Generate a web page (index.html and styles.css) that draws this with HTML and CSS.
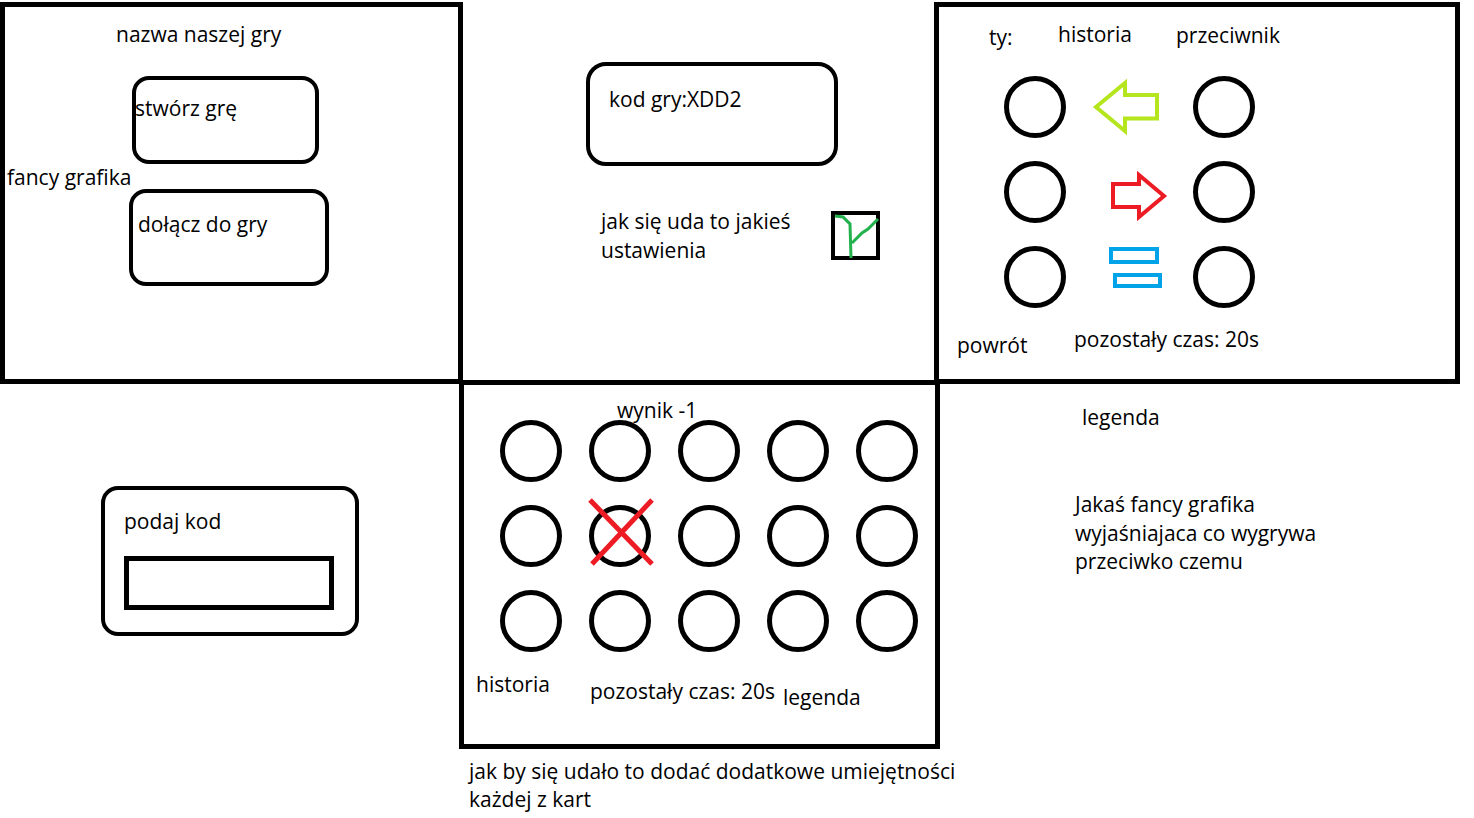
FILE: index.html
```html
<!DOCTYPE html>
<html lang="pl">
<head>
    <meta charset="UTF-8">
    <meta name="viewport" content="width=device-width, initial-scale=1.0">
    <title>Szkic gry</title>
    <link rel="stylesheet" href="styles.css">
</head>
<body>
    <div class="board">
        <!-- ekran startowy -->
        <div class="panel menu">
            <div class="game-title">nazwa naszej gry</div>
            <div class="btn btn-create">stwórz grę</div>
            <div class="fancy">fancy grafika</div>
            <div class="btn btn-join">dołącz do gry</div>
        </div>

        <!-- lobby -->
        <div class="lobby">
            <div class="code-box">kod gry:XDD2</div>
            <div class="settings">
                <div class="settings-text">jak się uda to jakieś<br>ustawienia</div>
                <svg class="checkbox" width="49" height="49" viewBox="0 0 49 49">
                    <rect x="2" y="2" width="45" height="45" fill="none" stroke="#000" stroke-width="4"/>
                    <path d="M4 5 L12 6 L19 13 L20 47 M21 32 L31 22 L37 18 L47 8" fill="none" stroke="#22b14c" stroke-width="3"/>
                </svg>
            </div>
        </div>

        <!-- pojedynek -->
        <div class="panel duel">
            <div class="duel-head">
                <span class="you">ty:</span>
                <span class="hist">historia</span>
                <span class="opp">przeciwnik</span>
            </div>
            <div class="duel-grid">
                <div class="circle"></div>
                <svg width="127" height="62" viewBox="0 0 127 62">
                    <polygon points="30,31 59,7 59,19 91,19 91,42.5 59,42.5 59,55" fill="none" stroke="#b5e61d" stroke-width="4"/>
                </svg>
                <div class="circle"></div>
                <div class="circle"></div>
                <svg width="127" height="62" viewBox="0 0 127 62">
                    <polygon points="47,23 73,23 73,14 98,35 73,56 73,46 47,46" fill="none" stroke="#ed1c24" stroke-width="4"/>
                </svg>
                <div class="circle"></div>
                <div class="circle"></div>
                <svg width="127" height="62" viewBox="0 0 127 62">
                    <rect x="45" y="3" width="46" height="13" fill="none" stroke="#00a2e8" stroke-width="4"/>
                    <rect x="49" y="29" width="45" height="11" fill="none" stroke="#00a2e8" stroke-width="4"/>
                </svg>
                <div class="circle"></div>
            </div>
            <div class="duel-foot">
                <span class="back">powrót</span>
                <span class="timer">pozostały czas: 20s</span>
            </div>
        </div>

        <!-- dołączanie -->
        <div class="join">
            <div class="code-form">
                <div>podaj kod</div>
                <div class="code-input"></div>
            </div>
        </div>

        <!-- rozgrywka -->
        <div class="panel game">
            <div class="score">wynik -1</div>
            <div class="cards">
                <div class="circle"></div>
                <div class="circle"></div>
                <div class="circle"></div>
                <div class="circle"></div>
                <div class="circle"></div>
                <div class="circle"></div>
                <div class="circle used">
                    <svg class="cross" width="70" height="70" viewBox="0 0 70 70">
                        <path d="M5 3 L67 67 M67 3 L7 67" stroke="#ed1c24" stroke-width="5"/>
                    </svg>
                </div>
                <div class="circle"></div>
                <div class="circle"></div>
                <div class="circle"></div>
                <div class="circle"></div>
                <div class="circle"></div>
                <div class="circle"></div>
                <div class="circle"></div>
                <div class="circle"></div>
            </div>
            <div class="game-foot">
                <span>historia</span>
                <span class="foot-timer">pozostały czas: 20s</span>
                <span class="foot-legend">legenda</span>
            </div>
        </div>

        <!-- legenda -->
        <div class="legend">
            <div class="legend-title">legenda</div>
            <div class="legend-text">Jakaś fancy grafika<br>wyjaśniajaca co wygrywa<br>przeciwko czemu</div>
        </div>

        <div class="note">jak by się udało to dodać dodatkowe umiejętności<br>każdej z kart</div>
    </div>
</body>
</html>
```

FILE: styles.css
```css
* {
    box-sizing: border-box;
}
body {
    margin: 0;
    background-color: white;
    color: #000;
    font-family: "Open Sans", "Noto Sans", sans-serif;
    font-size: 21px;
    line-height: 29px;
}
.board {
    display: grid;
    grid-template-columns: 463px 471px 526px;
    grid-template-rows: 382px auto auto;
    padding-top: 2px;
}
.panel {
    border: 5px solid #000;
}
.circle {
    position: relative;
    width: 62px;
    height: 62px;
    border: 5px solid #000;
    border-radius: 50%;
}
.btn {
    border: 4px solid #000;
    border-radius: 17px;
}

/* ekran startowy */
.menu {
    grid-column: 1;
    grid-row: 1;
}
.game-title {
    margin: 13px 0 0 111px;
}
.btn-create {
    width: 187px;
    height: 88px;
    margin: 27px 0 0 127px;
    padding-top: 14px;
    text-indent: -1px;
}
.fancy {
    margin: -1px 0 0 2px;
}
.btn-join {
    width: 200px;
    height: 97px;
    margin: -3px 0 0 124px;
    padding: 17px 0 0 5px;
}

/* lobby */
.lobby {
    grid-column: 2;
    grid-row: 1;
}
.code-box {
    width: 252px;
    height: 104px;
    margin: 60px 0 0 123px;
    padding: 19px 0 0 19px;
    border: 4px solid #000;
    border-radius: 20px;
}
.settings {
    display: flex;
    align-items: flex-start;
    margin: 41px 0 0 138px;
}
.settings-text {
    width: 230px;
}
.checkbox {
    margin-top: 4px;
}

/* pojedynek */
.duel {
    grid-column: 3;
    grid-row: 1;
}
.duel-head {
    display: grid;
    grid-template-columns: 69px 118px auto;
    align-items: start;
    margin: 13px 0 0 50px;
}
.you {
    margin-top: 3px;
}
.opp {
    margin-top: 1px;
}
.duel-grid {
    display: grid;
    grid-template-columns: 62px 127px 62px;
    grid-template-rows: repeat(3, 62px);
    row-gap: 23px;
    margin: 24px 0 0 65px;
}
.duel-grid svg {
    overflow: visible;
}
.duel-foot {
    display: grid;
    grid-template-columns: 117px auto;
    align-items: start;
    margin: 17px 0 0 18px;
}
.back {
    margin-top: 6px;
}

/* dołączanie */
.join {
    grid-column: 1;
    grid-row: 2;
}
.code-form {
    width: 258px;
    height: 150px;
    margin: 102px 0 0 101px;
    padding: 17px 0 0 19px;
    border: 4px solid #000;
    border-radius: 17px;
}
.code-input {
    width: 210px;
    height: 54px;
    margin-top: 20px;
    border: 5px solid #000;
}

/* rozgrywka */
.game {
    grid-column: 2;
    grid-row: 2;
    height: 369px;
    margin: -4px -6px 0 -4px;
}
.score {
    margin: 11px 0 0 153px;
}
.cards {
    display: grid;
    grid-template-columns: repeat(5, 62px);
    grid-template-rows: repeat(3, 62px);
    column-gap: 27px;
    row-gap: 23px;
    margin: -5px 0 0 36px;
}
.cross {
    position: absolute;
    left: -9px;
    top: -13px;
}
.game-foot {
    display: grid;
    grid-template-columns: 114px 193px auto;
    align-items: start;
    margin: 18px 0 0 12px;
}
.foot-timer {
    margin-top: 7px;
}
.foot-legend {
    margin-top: 13px;
}

/* legenda */
.legend {
    grid-column: 3;
    grid-row: 2;
}
.legend-title {
    margin: 19px 0 0 148px;
}
.legend-text {
    margin: 58px 0 0 141px;
    line-height: 28.5px;
}

.note {
    grid-column: 2;
    grid-row: 3;
    margin: 8px 0 0 6px;
    line-height: 28px;
    white-space: nowrap;
}
```
